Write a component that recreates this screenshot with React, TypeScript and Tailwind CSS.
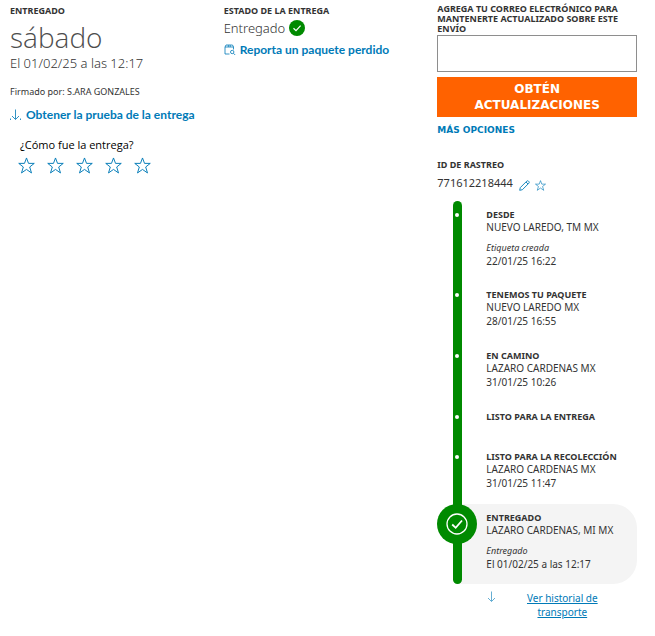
import React from "react";

type Step = {
  title: string;
  place?: string;
  note?: string;
  date?: string;
  size: string;
};

const steps: Step[] = [
  { title: "DESDE", place: "NUEVO LAREDO, TM MX", note: "Etiqueta creada", date: "22/01/25 16:22", size: "min-h-20" },
  { title: "TENEMOS TU PAQUETE", place: "NUEVO LAREDO MX", date: "28/01/25 16:55", size: "min-h-[61px]" },
  { title: "EN CAMINO", place: "LAZARO CARDENAS MX", date: "31/01/25 10:26", size: "min-h-[61px]" },
  { title: "LISTO PARA LA ENTREGA", size: "min-h-10" },
  { title: "LISTO PARA LA RECOLECCIÓN", place: "LAZARO CARDENAS MX", date: "31/01/25 11:47", size: "min-h-[61px]" },
];

function StarIcon({ className }: { className: string }) {
  return (
    <svg viewBox="0 0 16 16" className={className} fill="none" stroke="currentColor" strokeWidth=".9" aria-hidden="true">
      <path d="M8 .9 L9.9 6 H15.3 L11 9.4 L12.7 15 L8 11.7 L3.3 15 L5 9.4 L.7 6 H6.1 Z" />
    </svg>
  );
}

function DownArrow({ className, ticks }: { className: string; ticks?: boolean }) {
  return (
    <svg viewBox="0 0 12 12" className={className} fill="none" stroke="currentColor" strokeWidth="1" aria-hidden="true">
      <path d="M5.5 .5 V10.5 M2 7 L5.5 10.5 L9 7" />
      {ticks && <path d="M.5 9.5 V11 M10.5 9.5 V11" />}
    </svg>
  );
}

function StepText({ title, place, note, date }: Omit<Step, "size">) {
  return (
    <>
      <h3 className="text-[9px] leading-[13px] font-bold">{title}</h3>
      {place && <p className="text-[10px] leading-[13px]">{place}</p>}
      {note && <p className="mt-[7px] text-[9px] leading-[13px] italic">{note}</p>}
      {date && <p className="text-[10px] leading-[14px]">{date}</p>}
    </>
  );
}

export default function App() {
  return (
    <main className="grid grid-cols-3 bg-white pr-1 pl-[10px] font-['Noto_Sans','Open_Sans',sans-serif] text-[#333333]">
      <section className="pt-[5px]">
        <h2 className="text-[9px] leading-3 font-bold">ENTREGADO</h2>
        <p className="mt-1 font-['Open_Sans','Noto_Sans',sans-serif] text-[28px] leading-8 font-light text-[#4d4d4d]">sábado</p>
        <p className="mt-[2px] text-[13px] leading-4 font-light">El 01/02/25 a las 12:17</p>
        <p className="mt-[15px] text-[9px] leading-3">Firmado por: S.ARA GONZALES</p>
        <a
          href="#prueba"
          className="mt-[9px] flex items-center font-['Lato','Noto_Sans',sans-serif] text-[12px] leading-4 font-bold text-[#007ab7]"
        >
          <DownArrow className="mr-1 size-3 opacity-80" ticks />
          Obtener la prueba de la entrega
        </a>
        <fieldset className="mt-[14px] pl-[10px]">
          <legend className="font-['Open_Sans','Noto_Sans',sans-serif] text-[11px] leading-4 text-black">¿Cómo fue la entrega?</legend>
          <div className="mt-1 -ml-[3px] flex gap-[10px] text-[#007ab7]">
            {[1, 2, 3, 4, 5].map((n) => (
              <button key={n} type="button" aria-label={`${n} de 5 estrellas`} className="px-px">
                <StarIcon className="size-[17px]" />
              </button>
            ))}
          </div>
        </fieldset>
      </section>

      <section className="pt-[5px]">
        <h2 className="text-[9px] leading-3 font-bold">ESTADO DE LA ENTREGA</h2>
        <p className="mt-[3px] flex items-center gap-1 text-[13px] leading-4 font-light">
          Entregado
          <svg viewBox="0 0 16 16" className="size-4" fill="none" aria-hidden="true">
            <circle cx="8" cy="8" r="8" fill="#008a00" />
            <path d="M4.5 8.2 L7 10.6 L11.6 5.6" stroke="white" strokeWidth="1.2" />
          </svg>
        </p>
        <a
          href="#perdido"
          className="mt-[6px] flex items-center gap-1 font-['Lato','Noto_Sans',sans-serif] text-[12px] leading-4 font-bold text-[#007ab7]"
        >
          <svg viewBox="0 0 12 12" className="size-3" fill="none" stroke="currentColor" strokeWidth=".8" aria-hidden="true">
            <path d="M5.5 10 H1 V3 L2 1 H8.5 L9.5 3 V5.5 M1 3 H9.5 M4.3 1 V3 M6.2 1 V3" />
            <circle cx="8.2" cy="8" r="1.7" />
            <path d="M9.5 9.3 L11.2 11" />
          </svg>
          Reporta un paquete perdido
        </a>
      </section>

      <section className="pt-1 pr-[14px]">
        <label htmlFor="email" className="block text-[9px] leading-[10px] font-bold">
          AGREGA TU CORREO ELECTRÓNICO PARA MANTENERTE ACTUALIZADO SOBRE ESTE ENVÍO
        </label>
        <input id="email" type="email" className="mt-px block h-[37px] w-full border border-[#8e8e8e] bg-white px-2 text-[13px] outline-none" />
        <button
          type="button"
          className="mt-[5px] block w-full bg-[#ff6200] px-8 py-1 font-['DejaVu_Sans',sans-serif] text-[12px] leading-4 font-bold text-white"
        >
          OBTÉN ACTUALIZACIONES
        </button>
        <a href="#opciones" className="mt-[7px] block font-['DejaVu_Sans',sans-serif] text-[9px] leading-3 font-bold text-[#007ab7]">
          MÁS OPCIONES
        </a>

        <h2 className="mt-[23px] text-[9px] leading-3 font-bold">ID DE RASTREO</h2>
        <div className="mt-1 flex items-center text-[11px] leading-4">
          771612218444
          <button type="button" aria-label="Editar" className="mt-1 ml-[6px] text-[#007ab7]">
            <svg viewBox="0 0 11 11" className="size-[11px]" fill="none" stroke="currentColor" strokeWidth=".9" aria-hidden="true">
              <path d="M.7 10.3 L1.3 7.6 L7.8 1.1 Q8.6 .4 9.4 1.1 L9.9 1.6 Q10.6 2.4 9.9 3.2 L3.4 9.7 Z M7 2 L9 4" />
            </svg>
          </button>
          <button type="button" aria-label="Agregar a favoritos" className="mt-1 ml-[5px] text-[#007ab7]">
            <StarIcon className="size-[11px]" />
          </button>
        </div>

        <ol className="mt-[10px]">
          {steps.map((step, i) => (
            <li key={step.title} className={`flex ${step.size}`}>
              <div className="mr-[9px] flex w-10 shrink-0 justify-center">
                <div className={`flex w-[9px] justify-center bg-[#008a00] pt-3 ${i === 0 ? "rounded-t-full" : ""}`}>
                  <span className="size-1 rounded-full bg-white" />
                </div>
              </div>
              <div className="pt-[7px]">
                <StepText {...step} />
              </div>
            </li>
          ))}
          <li className="flex min-h-20">
            <div className="relative z-10 flex w-10 shrink-0 justify-center">
              <div className="w-[9px] rounded-b-full bg-[#008a00]" />
              <svg viewBox="0 0 40 40" className="absolute top-0 left-0 size-10" fill="none" aria-hidden="true">
                <circle cx="20" cy="20" r="20" fill="#008a00" />
                <circle cx="20" cy="20" r="10" stroke="white" strokeWidth="1.3" />
                <path d="M15.2 20.5 L18.7 23.8 L25 16.5" stroke="white" strokeWidth="1.8" />
              </svg>
            </div>
            <div className="-ml-5 grow rounded-r-3xl bg-[#f4f4f4] pt-[7px] pl-[29px]">
              <StepText title="ENTREGADO" place="LAZARO CARDENAS, MI MX" note="Entregado" date="El 01/02/25 a las 12:17" />
            </div>
          </li>
        </ol>

        <div className="mt-[7px] flex pl-[49px] text-[#007ab7]">
          <DownArrow className="size-3 shrink-0 opacity-60" />
          <a href="#historial" className="ml-6 w-20 text-center text-[10px] leading-[14px] underline">
            Ver historial de transporte
          </a>
        </div>
      </section>
    </main>
  );
}
